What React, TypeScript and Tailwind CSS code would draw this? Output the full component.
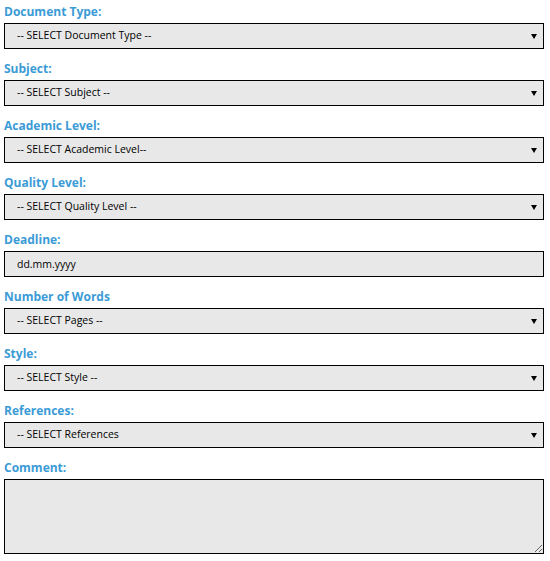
import { useState } from "react";

const selectFields = [
  { label: "Document Type:", placeholder: "-- SELECT Document Type --" },
  { label: "Subject:", placeholder: "-- SELECT Subject --" },
  { label: "Academic Level:", placeholder: "-- SELECT Academic Level--" },
  { label: "Quality Level:", placeholder: "-- SELECT Quality Level --" },
];

const moreFields = [
  { label: "Number of Words", placeholder: "-- SELECT Pages --" },
  { label: "Style:", placeholder: "-- SELECT Style --" },
  { label: "References:", placeholder: "-- SELECT References" },
];

const Label = ({ children }: { children: string }) => (
  <label className="block h-[22px] pt-[3px] text-[12px] leading-[16px] font-bold text-[#3b9bd6]">
    {children}
  </label>
);

const SelectBox = ({ placeholder }: { placeholder: string }) => (
  <div className="relative">
    <select
      defaultValue=""
      className="block w-full h-[26px] appearance-none border border-black bg-[#e8e8e8] pl-[12px] text-[10.5px] text-black outline-none rounded-none"
    >
      <option value="">{placeholder}</option>
    </select>
    {/* arrow */}
    <svg className="absolute right-[7px] top-[11px] pointer-events-none" width="6" height="5" viewBox="0 0 6 5">
      <path d="M0 0H6L3 5Z" fill="#000" />
    </svg>
  </div>
);

export default function App() {
  const [comment, setComment] = useState("");

  return (
    <div className="w-[550px] pt-[1px] pl-[4px] pr-[6px] bg-white" style={{ fontFamily: '"Open Sans", sans-serif' }}>
      {selectFields.map((f) => (
        <div key={f.label} className="mb-[9px]">
          <Label>{f.label}</Label>
          <SelectBox placeholder={f.placeholder} />
        </div>
      ))}

      <div className="mb-[9px]">
        <Label>Deadline:</Label>
        <input
          type="text"
          placeholder="dd.mm.yyyy"
          className="block w-full h-[26px] border border-black bg-[#e8e8e8] pl-[12px] text-[10.5px] text-black placeholder:text-black outline-none"
        />
      </div>

      {moreFields.map((f) => (
        <div key={f.label} className="mb-[9px]">
          <Label>{f.label}</Label>
          <SelectBox placeholder={f.placeholder} />
        </div>
      ))}

      <div>
        <Label>Comment:</Label>
        <textarea
          value={comment}
          onChange={(e) => setComment(e.target.value)}
          className="block w-full h-[75px] border border-black bg-[#e8e8e8] px-[12px] py-[4px] text-[10.5px] outline-none"
        />
      </div>
    </div>
  );
}
